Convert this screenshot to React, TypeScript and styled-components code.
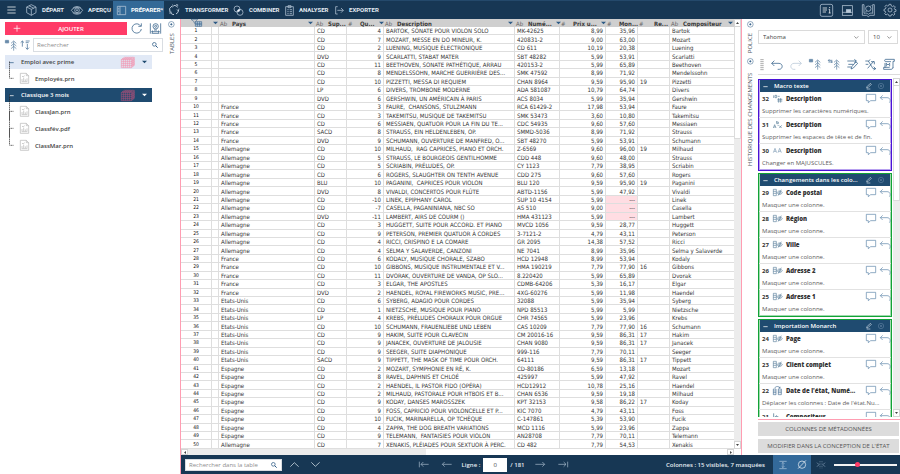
import React from "react";
import styled, { createGlobalStyle, css } from "styled-components";

const ui = `"Open Sans", "Noto Sans", sans-serif`;
const gridFont = `"DejaVu Sans Condensed", "Noto Sans", sans-serif`;
const navy = "#173754";
const blue = "#1f4b70";
const pink = "#ff3b67";
const line = "#2c5a85";

const GlobalStyle = createGlobalStyle`
  *, *::before, *::after { box-sizing: border-box; }
  body { margin: 0; background: #fff; font: 6px/8px ${ui}; color: #444; overflow: hidden; }
  button, input, select { font: inherit; color: inherit; margin: 0; padding: 0; border: 0; background: none; border-radius: 0; outline: 0; }
  h2, h3, p, ul { margin: 0; padding: 0; font: inherit; list-style: none; }
`;

/* ---------- icons ---------- */

const Svg = styled.svg<{ $w: number; $h: number; $c?: string }>`
  flex: none;
  display: block;
  width: ${(p) => p.$w}px;
  height: ${(p) => p.$h}px;
  color: ${(p) => p.$c ?? "inherit"};
  fill: none;
  stroke: currentColor;
  stroke-width: 2.2;
  overflow: visible;
`;

/* Every drawing uses three units to a pixel. */
const Icon = ({ w, h, d, c, children }: { w: number; h: number; d?: string; c?: string; children?: React.ReactNode }) => (
  <Svg $w={w} $h={h} $c={c} viewBox={`0 0 ${w * 3} ${h * 3}`} aria-hidden="true">
    {d && <path d={d} />}
    {children}
  </Svg>
);

const CubeIcon = () => <Icon w={11} h={12} d="M16 2 30 9V26L16 34 2 26V9ZM2 9l14 7 14-7M16 16V34M9 5.500l14 7" />;
const EyeIcon = () => (
  <Icon w={12} h={9} d="M1 13C9 1 27 1 35 13 27 25 9 25 1 13ZM5 7C12 0 24 0 31 7M5 20C12 26 24 26 31 20">
    <circle cx="18" cy="13" r="7" />
    <circle cx="18" cy="13" r="2" />
  </Icon>
);
const PanelsIcon = () => <Icon w={9} h={9} d="M1 1H26V26H1ZM9 1V26M3 7H7M3 12H7M3 17H7" />;
const CycleIcon = () => (
  <Icon w={12} h={12}>
    <path d="M6 24A14 14 0 0 1 12 6M18 4A14 14 0 0 1 29 10M32 18A14 14 0 0 1 24 30M18 32A14 14 0 0 1 8 27" strokeWidth="3" />
    <path d="M12 2l5 4-5 4M33 14l-2 6-5-3M6 30l0-6 6 1M24 2h5v5" />
  </Icon>
);
const CombineIcon = () => (
  <Icon w={11} h={11}>
    <circle cx="12" cy="12" r="9" />
    <circle cx="21" cy="22" r="9" />
    <path d="M13 20C13 15 17 12 21 13 21 18 17 21 13 20Z" fill="#fff" />
  </Icon>
);
const ClipboardIcon = () => <Icon w={9} h={11} d="M2 5H25V31H2ZM9 2H18V8H9ZM7 14H11M14 14H21M7 20H11M14 20H21M7 26H11M14 26H21" />;
const ExportIcon = () => <Icon w={9} h={9} d="M8 2H2V24H8M7 13H25M18 6l7 7-7 7" />;

const NoteIcon = () => (
  <Icon w={13} h={13}>
    <rect x="1" y="1" width="37" height="36" rx="5" />
    <path d="M8 12H21M8 18H21M8 24H18M29 16V27M26 16H29M26 27H32M29 9V12" stroke="#fff" />
  </Icon>
);
const WindowIcon = () => (
  <Icon w={11} h={11}>
    <rect x="1" y="2" width="30" height="29" />
    <path d="M1 22H31" />
    <rect x="13" y="14" width="13" height="8" fill="currentColor" />
  </Icon>
);
const BookIcon = () => (
  <Icon w={13} h={13} d="M6 2H1V34H14l5 4 5-4H37V2H32M6 2V28C12 26 16 28 19 31 22 28 26 26 32 28V2">
    <circle cx="19" cy="14" r="8" />
    <path d="M14 20l-3 4M24 8l4-4" />
  </Icon>
);
const GearIcon = () => (
  <Icon w={12} h={12}>
    <path
      d="M15 1H21L22 6 26 8 30 5 34 9 31 13 32 16 36 17V22L31 23 30 26 33 30 29 34 25 31 22 32 21 36H15L14 32 10 30 6 33 2 29 5 25 4 22 0 21V16L4 15 6 11 3 7 7 3 11 6 14 5Z"
    />
    <circle cx="18" cy="18" r="6" />
  </Icon>
);
const RefreshIcon = () => <Icon w={11} h={11} d="M29 9A14 14 0 1 0 31 18M31 1V10H22" />;
const ScanIcon = () => (
  <Icon w={11} h={11} d="M1 1V32M32 1V32M5 26H28M5 31H28M9 23l-4 3 4 3M24 23l4 3-4 3M12 21H21">
    <circle cx="17" cy="10" r="8" />
    <circle cx="17" cy="10" r="3" />
  </Icon>
);
const TreeIcon = ({ second }: { second?: boolean }) => (
  <Icon w={12} h={11} c="#416b92">
    <path d="M26 4V32M18 10l8-7 8 7M18 18l8-7 8 7M18 26l8-7 8 7" strokeWidth="1.800" />
    {second ? <path d="M1 4H13M1 9H13M4 1L1 4l3 3M10 6l3 3-3 3" /> : <path d="M1 1H11V9H1ZM6 1V9M1 5H11" strokeWidth="1.500" fill="#9fb5ca" />}
  </Icon>
);
const SortIcon = () => <Icon w={10} h={10} d="M7 20V3M2 8l5-5 5 5M22 12V28M17 23l5 5 5-5M17 3H29M17 8H26" c="#416b92" />;
const SearchIcon = () => (
  <Icon w={6} h={6} c={line}>
    <circle cx="7" cy="7" r="5.500" />
    <path d="M11 11l6 6" strokeWidth="3" />
  </Icon>
);
const DotIcon = () => (
  <Icon w={7} h={7} c={line}>
    <circle cx="10" cy="10" r="8.500" strokeWidth="1.500" />
    <circle cx="10" cy="10" r="2" fill="currentColor" />
  </Icon>
);
const MeshIcon = ({ c }: { c: string }) => (
  <Icon w={14} h={11} c={c}>
    <path
      d="M1 8H31V32H1ZM1 14H31M1 20H31M1 26H31M7 8V32M13 8V32M19 8V32M25 8V32M31 8l9-6V25l-9 7M1 8l9-7H40M31 14l9-6M31 20l9-6M31 26l9-6M34 6V29M37 4V27M7 8l9-7M13 8l9-7M19 8l9-7M25 8l9-7M4 5H34"
      strokeWidth="1.700"
    />
  </Icon>
);
const FileIcon = () => (
  <Icon w={9} h={11} c="#b5b5b5">
    <path d="M1 1H19l7 7V31H1ZM19 1V8H26" strokeWidth="2" />
    <path d="M6 25V18M11 25V14M16 25V19M21 25V16M5 26H22M6 9l3 3 5-4" strokeWidth="2" />
  </Icon>
);
const BranchLine = ({ last }: { last: boolean }) => (
  <Icon w={5} h={17} c="#222">
    <path d={`M1.500 ${last ? "-25V25" : "-25V51"}M5 25H13`} strokeWidth="3" strokeDasharray="3 3" />
  </Icon>
);
const DownIcon = ({ c = line }: { c?: string }) => (
  <Icon w={5} h={4} c={c}>
    <path d="M0 2H15L7.500 10Z" fill="currentColor" stroke="none" />
  </Icon>
);
const FilterTableIcon = () => (
  <Icon w={11} h={8} c={line}>
    <path d="M0 1H20L13 8V14L9 11V8Z" strokeWidth="1.500" />
    <path d="M13 8H32V22H13ZM13 13H32M13 17H32M19 8V22M26 8V22" strokeWidth="1.700" fill="#c3d3e2" />
  </Icon>
);
const UndoIcon = ({ c = line, flip }: { c?: string; flip?: boolean }) => (
  <Icon w={12} h={10} c={c}>
    <path d={flip ? "M26 2l8 8-8 8M34 10H12C-1 11 0 27 11 28H16" : "M10 2L2 10l8 8M2 10H24C37 11 36 27 25 28H20"} />
  </Icon>
);
const RenameIcon = () => <Icon w={11} h={11} d="M1 6H28M22 1l6 5-6 5M4 16H20M1 24H13M12 30l3-8L27 9l5 4-13 14Z" c={line} />;
const BranchIcon = () => <Icon w={11} h={11} d="M1 6H10L24 29H32M26 23l6 6-6 4M10 6l6-4M8 28l18-21M18 8h10v8M2 16H10" c={line} />;
const ScriptIcon = () => <Icon w={12} h={11} d="M8 1H34V7H30V26M8 1C4 1 4 8 8 8H24M6 12V26M2 31H24C30 31 30 25 30 24M2 31V25H20M10 13V22M10 13l5 5 5-5V22" c={line} />;
const MinusIcon = ({ c = "#fff" }: { c?: string }) => <Icon w={5} h={5} c={c} d="M1 8H14" />;
const PenIcon = () => <Icon w={6} h={6} d="M3 11L13 1l3 3L6 14 2 15ZM2 18H13" c="#c3d0dd" />;
const CloseIcon = () => (
  <Icon w={6} h={6} c="#6d8daa">
    <circle cx="9" cy="9" r="8" strokeWidth="1.500" />
    <path d="M6 6l6 6M12 6l-6 6" strokeWidth="1.500" />
  </Icon>
);
const CommentIcon = () => (
  <Icon w={10} h={9} c="#5b84a8">
    <path d="M1 1H29V20H14L7 26V20H1Z" strokeWidth="2" />
  </Icon>
);
const StepUndoIcon = () => (
  <Icon w={10} h={8} c="#5b84a8">
    <path d="M8 1L1 8l7 7M1 8H21C32 8 32 19 28 23" strokeWidth="2" />
  </Icon>
);

const stepIcons: Record<string, React.ReactNode> = {
  digits: (
    <Icon w={9} h={8} c="#47708f">
      <path d="M2 1V9M6 1H11V8H6ZM17 9V23M23 9V23M13 13H28M13 18H28M14 4H20" strokeWidth="1.800" />
    </Icon>
  ),
  spaces: (
    <Icon w={9} h={9} c="#47708f">
      <path d="M1 24L5 14 9 24M3 21H7M11 3V11H16V6H11M19 18l7 5M26 16l-7 8M14 15l3 3" strokeWidth="1.800" />
    </Icon>
  ),
  upper: (
    <Icon w={9} h={5} c="#7e9bb5">
      <path d="M1 14L6 1 11 14M3 10H9M15 14L20 1 25 14M17 10H23" strokeWidth="2" />
    </Icon>
  ),
  hide: (
    <Icon w={9} h={7} c="#47708f">
      <path d="M1 1H10V20H1ZM1 7H10M1 13H10" strokeWidth="1.700" />
      <path d="M12 11C16 4 24 4 28 11 24 18 16 18 12 11ZM25 2L15 20" strokeWidth="1.700" />
      <circle cx="20" cy="11" r="3" strokeWidth="1.500" />
    </Icon>
  ),
  move: (
    <Icon w={9} h={9} c={line}>
      <path d="M1 9H9V26H1ZM16 9H25V26H16ZM1 15H9M1 20H9M16 15H25M16 20H25M5 6C9 0 17 0 21 6M21 6V2M21 6H17" strokeWidth="1.700" />
    </Icon>
  ),
  size: <Icon w={9} h={7} c="#47708f" d="M2 1V20M8 11H16M11 7L7 11l4 4" />,
};

/* ---------- frame ---------- */

const Page = styled.div`
  display: flex;
  flex-direction: column;
  height: 100vh;
`;

const TopBar = styled.header`
  flex: none;
  display: flex;
  align-items: stretch;
  height: 19px;
  background: ${navy};
  border-top: 1px solid #24496b;
  color: #dfe8f0;
`;

const BareButton = styled.button`
  display: inline-flex;
  align-items: center;
  justify-content: center;
  flex: none;
  cursor: pointer;
`;

const MenuButton = styled(BareButton)`
  width: 22px;
  color: #fff;
`;

const Nav = styled.nav`
  display: flex;
`;

const NavLink = styled.a<{ $active?: boolean; $w: number }>`
  display: flex;
  align-items: center;
  gap: 5px;
  width: ${(p) => p.$w}px;
  padding: 0 4px;
  font-family: Roboto, ${ui};
  font-weight: 700;
  color: ${(p) => (p.$active ? "#fff" : "#e3ebf2")};
  background: ${(p) => (p.$active ? "#336997" : "none")};
  text-decoration: none;
  white-space: nowrap;
`;

const NavIcon = styled.span`
  display: flex;
  color: #b8c8d8;
`;

const TopTools = styled.div`
  display: flex;
  align-items: center;
  gap: 9px;
  margin-left: auto;
  padding-right: 4px;
  color: #b8c8d8;
`;

const Body = styled.div`
  flex: 1;
  display: flex;
  min-height: 0;
`;

const Sidebar = styled.aside`
  flex: none;
  width: 180px;
  display: flex;
`;

const SideContent = styled.div`
  flex: 1;
  padding: 3px 0 0 5px;
`;

const Workspace = styled.div`
  flex: 1;
  min-width: 0;
  display: flex;
  flex-direction: column;
  border-left: 1px solid #ff9db2;
`;

const Panels = styled.div`
  flex: 1;
  min-height: 0;
  display: flex;
`;

const Rail = styled.div<{ $w: number }>`
  flex: none;
  width: ${(p) => p.$w}px;
  display: flex;
  flex-direction: column;
  align-items: center;
  gap: 5px;
  padding-top: 2px;
`;

const RailTab = styled.button<{ $h: number }>`
  display: flex;
  align-items: center;
  justify-content: center;
  min-height: ${(p) => p.$h}px;
  writing-mode: vertical-rl;
  transform: rotate(180deg);
  white-space: nowrap;
  color: #4c5561;
`;

/* ---------- sidebar ---------- */

const SideTools = styled.div`
  display: flex;
  align-items: center;
  gap: 4px;
  height: 13px;
  padding-right: 2px;
  color: ${line};
`;

const ToolPair = styled.div`
  display: flex;
  gap: 8px;
`;

const AddButton = styled.button`
  flex: 1;
  display: grid;
  grid-template-columns: 10px 1fr;
  align-items: center;
  height: 13px;
  padding: 0 8px;
  background: ${pink};
  color: #fff;
  font-weight: 600;
`;

const SearchRow = styled.div`
  display: flex;
  align-items: center;
  gap: 3px;
  margin: 3px 0;
`;

const SearchBox = styled.label<{ $w?: number }>`
  display: flex;
  align-items: center;
  ${(p) => (p.$w ? css`width: ${p.$w}px;` : css`flex: 1;`)}
  height: ${(p) => (p.$w ? 12 : 14)}px;
  padding: 0 4px 0 3px;
  border: 1px solid #d9dde2;
  background: #fff;
  input { flex: 1; min-width: 0; height: 10px; color: #444; font-weight: 400; }
  input::placeholder { color: #8d8d8d; opacity: 1; }
`;

const Group = styled.section`
  width: 147px;
  margin-bottom: 1px;
  ul { padding-top: 1px; }
`;

const GroupHead = styled.h2<{ $active?: boolean }>`
  display: flex;
  align-items: center;
  height: 14px;
  padding: 0 5px 0 4px;
  gap: 7px;
  font-weight: 600;
  color: ${(p) => (p.$active ? "#fff" : "#444")};
  background: ${(p) => (p.$active ? blue : "#e1e9f6")};
  span { flex: 1; }
`;

const FileRow = styled.li`
  display: flex;
  align-items: center;
  height: 17px;
  padding-left: 4px;
  gap: 6px;
  font-weight: 600;
`;

/* ---------- data grid ---------- */

const GridPane = styled.main`
  flex: 1;
  min-width: 0;
  display: flex;
  flex-direction: column;
  border-right: 1px solid #ff9db2;
`;

const GridArea = styled.div`
  flex: 1;
  min-height: 0;
  display: flex;
`;

const TableBox = styled.div`
  flex: 1;
  min-width: 0;
  height: 100%;
`;

const Table = styled.table`
  width: 100%;
  height: 100%;
  table-layout: fixed;
  border-collapse: separate;
  border-spacing: 0;
  font: 6px/7px ${gridFont};
  color: #333;
`;

const HeadCell = styled.th`
  height: 8px;
  padding: 0 2px 0 1px;
  background: #cfcfcf;
  font-weight: 700;
  text-align: left;
  color: #3a3a3a;
`;

const HeadInner = styled.div<{ $end?: boolean }>`
  display: flex;
  align-items: center;
  gap: 4px;
  height: 8px;
  white-space: nowrap;
  b { flex: 1; text-align: ${(p) => (p.$end ? "right" : "left")}; }
`;

const TypeTag = styled.span`
  width: 8px;
  flex: none;
  font-weight: 400;
  color: #666;
`;

const Cell = styled.td<{ $align?: "right" | "center"; $bad?: boolean; $small?: boolean }>`
  padding: 0 2px;
  height: 8px;
  border-right: 1px solid #dedede;
  border-bottom: 1px solid #dedede;
  text-align: ${(p) => p.$align ?? "left"};
  white-space: pre;
  vertical-align: middle;
  background: ${(p) => (p.$bad ? "#ffdde3" : "#fff")};
  ${(p) => p.$small && css`font-size: 5px; color: #111;`}
`;

const VScroll = styled.div<{ $thumb: string }>`
  flex: none;
  width: 7px;
  display: flex;
  flex-direction: column;
  background: #ececec;
  i { flex: none; height: ${(p) => p.$thumb}; background: #fff; border: 1px solid #dcdcdc; border-top: 0; }
`;

const ScrollEnd = styled(BareButton)`
  width: 7px;
  height: 8px;
  background: #fff;
  border: 1px solid #d5d5d5;
`;

const Spacer = styled.span`
  flex: 1;
`;

const HScroll = styled.div`
  flex: none;
  display: flex;
  height: 6px;
  background: #fff;
  padding-right: 7px;
  i { width: 43%; background: #ececec; }
  button { height: 6px; }
`;

/* ---------- change history ---------- */

const History = styled.aside`
  flex: none;
  width: 142px;
  display: flex;
  flex-direction: column;
`;

const FontRow = styled.div`
  display: flex;
  gap: 3px;
  padding: 11px 2px 0 0;
`;

const SelectBox = styled.label<{ $w?: number }>`
  display: flex;
  align-items: center;
  ${(p) => (p.$w ? css`width: ${p.$w}px;` : css`flex: 1;`)}
  height: 14px;
  padding: 0 5px 0 4px;
  border: 1px solid #dadada;
  select { flex: 1; min-width: 0; appearance: none; }
`;

const ToolRow = styled.div`
  display: flex;
  align-items: center;
  justify-content: space-between;
  height: 20px;
  margin-top: 11px;
  padding: 0 5px 0 2px;
  border-bottom: 1px solid #dcdcdc;
`;

const Steps = styled.div`
  flex: 1;
  min-height: 0;
  display: flex;
  margin-top: 3px;
`;

const StepList = styled.div`
  flex: 1;
  min-width: 0;
  display: flex;
  flex-direction: column;
  gap: 2px;
  padding: 1px 1px 0 0;
  overflow: hidden;
`;

const StepGroup = styled.section<{ $c: string }>`
  flex: none;
  border: 1px solid ${(p) => p.$c};
  box-shadow: inset 0 0 0 1px ${(p) => p.$c}66;
`;

const StepHead = styled.h3`
  display: flex;
  align-items: center;
  gap: 6px;
  height: 12px;
  padding: 0 6px 0 3px;
  margin: 0 1px;
  background: ${blue};
  color: #fff;
  font-weight: 600;
  span { flex: 1; white-space: nowrap; }
`;

const Step = styled.li`
  height: 26px;
  padding: 1px 1px 0 3px;
  border-bottom: 1px solid #e2e2e2;
  &:last-child { border-bottom: 0; }
  p { margin-top: 3px; white-space: nowrap; color: #5d5d5d; }
`;

const StepTitle = styled.div`
  display: flex;
  align-items: center;
  gap: 4px;
  height: 11px;
  color: #333;
  font-weight: 700;
  white-space: nowrap;
  strong { flex: 1; }
`;

const Actions = styled.div`
  flex: none;
  display: grid;
  gap: 3px;
  margin-top: 2px;
  padding: 2px 1px 2px 0;
  border-top: 1px solid #ff9db2;
`;

const GreyButton = styled.button`
  height: 14px;
  background: #dcdcdc;
  color: #555;
  white-space: nowrap;
`;

/* ---------- status bar ---------- */

const StatusBar = styled.footer`
  flex: none;
  display: flex;
  align-items: center;
  height: 19px;
  padding: 0 3px 0 4px;
  background: ${navy};
  color: #e6edf3;
  font-weight: 600;
`;

const Arrows = styled.div<{ $gap: number }>`
  display: flex;
  align-items: center;
  gap: ${(p) => p.$gap}px;
  margin-left: 8px;
  color: #dce6ee;
`;

const Pager = styled.div`
  display: flex;
  align-items: center;
  gap: 10px;
  margin: 0 auto;
  color: #9fb3c6;
`;

const PageMoves = styled.div`
  display: flex;
  gap: 13px;
`;

const LineField = styled.label`
  display: flex;
  align-items: center;
  gap: 3px;
  color: #e6edf3;
  input { width: 24px; height: 14px; background: #fff; color: #444; text-align: center; font-weight: 400; }
`;

const Toggle = styled(BareButton)<{ $on?: boolean }>`
  width: 19px;
  height: 19px;
  color: #a9c2d8;
  background: ${(p) => (p.$on ? "#33699a" : "none")};
`;

const Zoom = styled.input`
  appearance: none;
  width: 63px;
  height: 6px;
  margin-left: 4px;
  background: linear-gradient(#f2f2f2, #f2f2f2) center / 100% 2px no-repeat;
  &::-webkit-slider-thumb { appearance: none; width: 5px; height: 5px; border-radius: 50%; background: ${pink}; }
`;

/* ---------- data ---------- */

const columns = [
  { w: 31 },
  { w: 7, filter: true },
  { w: 96, tag: "Ab", name: "Pays", filter: true },
  { w: 32, tag: "Ab", name: "Sup..." },
  { w: 37, tag: "#", name: "Qu...", filter: true, end: true },
  { w: 131, tag: "Ab", name: "Description", filter: true },
  { w: 45, tag: "Ab", name: "Numé...", filter: true },
  { w: 46, tag: "#", name: "Prix u...", filter: true, end: true },
  { w: 32, tag: "#", name: "Mon...", end: true },
  { w: 32, tag: "#", name: "Re...", end: true },
  { w: 65, tag: "Ab", name: "Compositeur", filter: true },
];

const F = "France";
const A = "Allemagne";
const U = "Etats-Unis";
const E = "Espagne";

type Row = [string, string, number, string, string, string, string, string, string];

const rows: Row[] = [
  ["", "CD", 4, "BARTOK, SONATE POUR VIOLON SOLO", "MK-42625", "8,99", "35,96", "", "Bartok"],
  ["", "CD", 7, "MOZART, MESSE EN DO MINEUR, K.", "420831-2", "9,00", "63,00", "", "Mozart"],
  ["", "CD", 2, "LUENING, MUSIQUE ÉLECTRONIQUE", "CD 611", "10,19", "20,38", "", "Luening"],
  ["", "DVD", 9, "SCARLATTI, STABAT MATER", "SBT 48282", "5,99", "53,91", "", "Scarlatti"],
  ["", "CD", 11, "BEETHOVEN, SONATE PATHÉTIQUE, ARRAU", "420153-2", "5,99", "65,89", "", "Beethoven"],
  ["", "CD", 8, "MENDELSSOHN, MARCHE GUERRIÈRE DES...", "SMK 47592", "8,99", "71,92", "", "Mendelssohn"],
  ["", "CD", 10, "PIZZETTI, MESSA DI REQUIEM", "CHAN 8964", "9,59", "95,90", "19", "Pizzetti"],
  ["", "LP", 6, "DIVERS, TROMBONE MODERNE", "ADA 581087", "10,79", "64,74", "", "Divers"],
  ["", "DVD", 6, "GERSHWIN, UN AMÉRICAIN À PARIS", "ACS 8034", "5,99", "35,94", "", "Gershwin"],
  [F, "CD", 3, "FAURE,  CHANSONS, STULZMANN", "RCA 61429-2", "17,98", "53,94", "", "Faure"],
  [F, "CD", 3, "TAKEMITSU, MUSIQUE DE TAKEMITSU", "SMK 53473", "3,60", "10,80", "", "Takemitsu"],
  [F, "CD", 6, "MESSIAEN, QUATUOR POUR LA FIN DU TE...", "CDC 54935", "9,60", "57,60", "", "Messiaen"],
  [F, "SACD", 8, "STRAUSS, EIN HELDENLEBEN, OP.", "SMMD-5036", "8,99", "71,92", "", "Strauss"],
  [F, "DVD", 9, "SCHUMANN, OUVERTURE DE MANFRED, O...", "SBT 48270", "5,99", "53,91", "", "Schumann"],
  [A, "CD", 10, "MILHAUD,  RAG CAPRICES, PIANO ET ORCH.", "Z-6569", "9,60", "96,00", "19", "Milhaud"],
  [A, "CD", 5, "STRAUSS, LE BOURGEOIS GENTILHOMME", "CDD 448", "9,60", "48,00", "", "Strauss"],
  [A, "CD", 5, "SCRIABIN, PRÉLUDES, OP.", "CY 1123", "7,79", "38,95", "", "Scriabin"],
  [A, "CD", 6, "ROGERS, SLAUGHTER ON TENTH AVENUE", "CDD 275", "9,60", "57,60", "", "Rogers"],
  [A, "BLU", 10, "PAGANINI,  CAPRICES POUR VIOLON", "BLU 120", "9,59", "95,90", "19", "Paganini"],
  [A, "DVD", 8, "VIVALDI, CONCERTOS POUR FLÛTE", "ABTD-1156", "5,99", "47,92", "", "Vivaldi"],
  [A, "CD", -10, "LINEK, EPIPHANY CAROL", "SUP 10 4154", "5,99", "---", "", "Linek"],
  [A, "CD", -7, "CASELLA, PAGANINIANA, NBC SO", "AS 510", "9,00", "---", "", "Casella"],
  [A, "DVD", -11, "LAMBERT, AIRS DE COURM ()", "HMA 431123", "5,99", "---", "", "Lambert"],
  [A, "CD", 3, "HUGGETT, SUITE POUR ACCORD. ET PIANO", "MVCD 1056", "9,59", "28,77", "", "Huggett"],
  [A, "CD", 9, "PETERSON, PREMIER QUATUOR À CORDES", "3-7121-2", "4,79", "43,11", "", "Peterson"],
  [A, "CD", 4, "RICCI, CRISPINO E LA COMARE", "GR 2095", "14,38", "57,52", "", "Ricci"],
  [A, "CD", 4, "SELMA Y SALAVERDE, CANZONI", "NE 7041", "8,99", "35,96", "", "Selma y Salaverde"],
  [F, "CD", 6, "KODALY, MUSIQUE CHORALE, SZABO", "HCD 12948", "8,99", "53,94", "", "Kodaly"],
  [F, "CD", 10, "GIBBONS, MUSIQUE INSTRUMENTALE ET V...", "HMA 190219", "7,79", "77,90", "16", "Gibbons"],
  [F, "CD", 11, "DVORAK, OUVERTURE DE VANDA, OP SLO...", "8.220420", "5,99", "65,89", "", "Dvorak"],
  [F, "CD", 3, "ELGAR, THE APOSTLES", "CDMB-64206", "5,39", "16,17", "", "Elgar"],
  [F, "DVD", 2, "HAENDEL, ROYAL FIREWORKS MUSIC, PRE...", "4XG-60276", "5,99", "11,98", "", "Haendel"],
  [U, "CD", 6, "SYBERG, ADAGIO POUR CORDES", "32088", "5,99", "35,94", "", "Syberg"],
  [U, "CD", 1, "NIETZSCHE, MUSIQUE POUR PIANO", "NPD 85513", "5,99", "5,99", "", "Nietzsche"],
  [U, "LP", 4, "KREBS, PRÉLUDES CHORAUX POUR ORGUE", "CHR 74565", "5,99", "23,96", "", "Krebs"],
  [U, "CD", 10, "SCHUMANN, FRAUENLIEBE UND LEBEN", "CAS 10209", "7,79", "77,90", "16", "Schumann"],
  [U, "CD", 9, "HAKIM, SUITE POUR CLAVECIN", "CM 20016-16", "9,59", "86,31", "17", "Hakim"],
  [U, "CD", 9, "JANACEK, OUVERTURE DE JALOUSIE", "CHAN 9080", "9,59", "86,31", "17", "Janacek"],
  [U, "CD", 9, "SEEGER, SUITE DIAPHONIQUE", "999-116", "7,79", "70,11", "", "Seeger"],
  [U, "SACD", 9, "TIPPETT, THE MASK OF TIME POUR ORCH.", "64111", "9,59", "86,31", "17", "Tippett"],
  [E, "CD", 2, "MOZART, SYMPHONIE EN RÉ, K.", "CD-80186", "6,59", "13,18", "", "Mozart"],
  [E, "CD", 8, "RAVEL, DAPHNIS ET CHLOÉ", "425997", "5,99", "47,92", "", "Ravel"],
  [E, "CD", 2, "HAENDEL, IL PASTOR FIDO (OPÉRA)", "HCD12912", "10,78", "25,16", "", "Haendel"],
  [E, "CD", 2, "MILHAUD, PASTORALE POUR HTBOIS ET B...", "CHAN 6536", "9,59", "19,18", "", "Milhaud"],
  [E, "CD", 9, "KODAY, DANSES MAROSSZEK", "KPT 32153", "9,58", "86,22", "17", "Koday"],
  [E, "CD", 9, "FOSS, CAPRICIO POUR VIOLONCELLE ET P...", "KIC 7070", "4,79", "43,11", "", "Foss"],
  [E, "CD", 10, "FUCIK, MARINARELLA, OP TCHÈQUE", "C-147861", "5,39", "53,90", "", "Fucik"],
  [E, "CD", 4, "ZAPPA, THE DOG BREATH VARIATIONS", "MCD 1116", "5,99", "23,96", "", "Zappa"],
  [E, "CD", 9, "TELEMANN,  FANTAISIES POUR VIOLON", "AN28708", "7,79", "70,11", "", "Telemann"],
  [A, "CD", 7, "XENAKIS, PLÉIADES POUR SEXTUOR À PERC.", "CD 482", "7,79", "54,53", "", "Xenakis"],
];

const nav = [
  { label: "DÉPART", icon: <CubeIcon />, w: 45 },
  { label: "APERÇU", icon: <EyeIcon />, w: 46 },
  { label: "PRÉPARER*", icon: <PanelsIcon />, w: 51, active: true },
  { label: "TRANSFORMER", icon: <CycleIcon />, w: 65 },
  { label: "COMBINER", icon: <CombineIcon />, w: 52 },
  { label: "ANALYSER", icon: <ClipboardIcon />, w: 50 },
  { label: "EXPORTER", icon: <ExportIcon />, w: 50 },
];

const sources = [
  { name: "Emploi avec prime", files: ["Employés.prn"] },
  { name: "Classique 3 mois", files: ["ClassJan.prn", "Classfév.pdf", "ClassMar.prn"], active: true },
];

type StepInfo = { n: number; name: string; icon: string; text?: string };

const hidden = (n: number, name: string): StepInfo => ({ n, name, icon: "hide", text: "Masquer une colonne." });

const history: { title: string; color: string; steps: StepInfo[] }[] = [
  {
    title: "Macro texte",
    color: "#4b12d6",
    steps: [
      { n: 32, name: "Description", icon: "digits", text: "Supprimer les caractères numériques." },
      { n: 31, name: "Description", icon: "spaces", text: "Supprimer les espaces de tête et de fin." },
      { n: 30, name: "Description", icon: "upper", text: "Changer en MAJUSCULES." },
    ],
  },
  {
    title: "Changements dans les colo...",
    color: "#12a336",
    steps: [hidden(29, "Code postal"), hidden(28, "Région"), hidden(27, "Ville"), hidden(26, "Adresse 2"), hidden(25, "Adresse 1")],
  },
  {
    title: "Importation Monarch",
    color: "#12a336",
    steps: [
      hidden(24, "Page"),
      hidden(23, "Client complet"),
      { n: 22, name: "Date de l'état, Numé...", icon: "move", text: "Déplacer les colonnes : Date de l'état.Nu..." },
      { n: 21, name: "Compositeur", icon: "size" },
    ],
  },
];

/* ---------- view ---------- */

const DataGrid = () => (
  <Table>
    <colgroup>
      {columns.map((c, i) => (
        <col key={i} width={c.w} />
      ))}
    </colgroup>
    <thead>
      <tr>
        {columns.map((c, i) => (
          <HeadCell key={i} scope="col">
            <HeadInner $end={c.end}>
              {i === 0 && (
                <>
                  <Spacer />
                  <FilterTableIcon />
                  <Spacer />
                </>
              )}
              {c.tag && <TypeTag>{c.tag}</TypeTag>}
              {c.name && <b>{c.name}</b>}
              {c.filter && <DownIcon />}
            </HeadInner>
          </HeadCell>
        ))}
      </tr>
    </thead>
    <tbody>
      {rows.map(([country, media, qty, title, ref, price, total, re, composer], i) => (
        <tr key={i}>
          <Cell $align="center" $small>{i + 1}</Cell>
          <Cell />
          <Cell>{country}</Cell>
          <Cell>{media}</Cell>
          <Cell $align="right">{qty}</Cell>
          <Cell>{title}</Cell>
          <Cell>{ref}</Cell>
          <Cell $align="right">{price}</Cell>
          <Cell $align="right" $bad={total === "---"}>{total}</Cell>
          <Cell>{re}</Cell>
          <Cell>{composer}</Cell>
        </tr>
      ))}
    </tbody>
  </Table>
);

const VerticalBar = ({ thumb }: { thumb: string }) => (
  <VScroll $thumb={thumb}>
    <ScrollEnd aria-label="Haut">
      <Icon w={3} h={2}><path d="M0 6 4.500 0 9 6Z" fill="#444" stroke="none" /></Icon>
    </ScrollEnd>
    <i />
    <Spacer />
    <ScrollEnd aria-label="Bas">
      <Icon w={3} h={2}><path d="M0 0H9L4.500 6Z" fill="#444" stroke="none" /></Icon>
    </ScrollEnd>
  </VScroll>
);

const App = () => (
  <Page>
    <GlobalStyle />
    <TopBar>
      <MenuButton aria-label="Menu">
        <Icon w={9} h={8} d="M1 3H26M1 12H26M1 21H26" />
      </MenuButton>
      <Nav>
        {nav.map((n) => (
          <NavLink key={n.label} href="#" $active={n.active} $w={n.w}>
            <NavIcon>{n.icon}</NavIcon>
            {n.label}
          </NavLink>
        ))}
      </Nav>
      <TopTools>
        <BareButton aria-label="Notes"><NoteIcon /></BareButton>
        <BareButton aria-label="Fenêtre"><WindowIcon /></BareButton>
        <BareButton aria-label="Aide"><BookIcon /></BareButton>
        <BareButton aria-label="Paramètres"><GearIcon /></BareButton>
      </TopTools>
    </TopBar>

    <Body>
      <Sidebar>
        <SideContent>
          <SideTools>
            <AddButton>
              <Icon w={8} h={7} d="M12 1V20M2 10H22" />
              AJOUTER
            </AddButton>
            <ToolPair>
              <BareButton aria-label="Actualiser"><RefreshIcon /></BareButton>
              <BareButton aria-label="Ajuster"><ScanIcon /></BareButton>
            </ToolPair>
          </SideTools>
          <SearchRow>
            <BareButton aria-label="Arborescence"><TreeIcon /></BareButton>
            <BareButton aria-label="Trier"><SortIcon /></BareButton>
            <SearchBox>
              <input aria-label="Rechercher" placeholder="Rechercher" />
              <SearchIcon />
            </SearchBox>
          </SearchRow>
          {sources.map((s) => (
            <Group key={s.name}>
              <GroupHead $active={s.active}>
                <MinusIcon c={s.active ? "#fff" : line} />
                <span>{s.name}</span>
                <MeshIcon c={s.active ? "#b04f78" : "#f58aa6"} />
                <DownIcon c={s.active ? "#fff" : blue} />
              </GroupHead>
              <ul>
                {s.files.map((f, i) => (
                  <FileRow key={f}>
                    <BranchLine last={i === s.files.length - 1} />
                    <FileIcon />
                    {f}
                  </FileRow>
                ))}
              </ul>
            </Group>
          ))}
        </SideContent>
        <Rail $w={17}>
          <DotIcon />
          <RailTab $h={22}>TABLES</RailTab>
        </Rail>
      </Sidebar>

      <Workspace>
        <Panels>
          <GridPane>
            <GridArea>
              <TableBox>
                <DataGrid />
              </TableBox>
              <VerticalBar thumb="26%" />
            </GridArea>
            <HScroll>
              <ScrollEnd aria-label="Gauche">
                <Icon w={2} h={3}><path d="M6 0V9L0 4.500Z" fill="#444" stroke="none" /></Icon>
              </ScrollEnd>
              <i />
              <Spacer />
              <ScrollEnd aria-label="Droite">
                <Icon w={2} h={3}><path d="M0 0V9L6 4.500Z" fill="#444" stroke="none" /></Icon>
              </ScrollEnd>
            </HScroll>
          </GridPane>

          <Rail $w={16}>
            <DotIcon />
            <RailTab $h={20}>POLICE</RailTab>
            <DotIcon />
            <RailTab $h={99}>HISTORIQUE DES CHANGEMENTS</RailTab>
          </Rail>

          <History>
            <FontRow>
              <SelectBox>
                <select aria-label="Police" defaultValue="Tahoma"><option>Tahoma</option></select>
                <Icon w={5} h={3} c="#777" d="M1 1l6 6 6-6" />
              </SelectBox>
              <SelectBox $w={30}>
                <select aria-label="Taille" defaultValue="10"><option>10</option></select>
                <Icon w={5} h={3} c="#777" d="M1 1l6 6 6-6" />
              </SelectBox>
            </FontRow>
            <ToolRow>
              <Icon w={4} h={11} c="#8a8a8a" d="M1 2H11M1 8H11M1 14H11M1 20H11M1 26H11M1 32H11" />
              <BareButton aria-label="Annuler"><UndoIcon /></BareButton>
              <BareButton aria-label="Rétablir"><UndoIcon flip c="#b5c6d6" /></BareButton>
              <BareButton aria-label="Développer"><TreeIcon /></BareButton>
              <BareButton aria-label="Réduire"><TreeIcon second /></BareButton>
              <BareButton aria-label="Modifier"><RenameIcon /></BareButton>
              <BareButton aria-label="Fusionner"><BranchIcon /></BareButton>
              <BareButton aria-label="Script"><ScriptIcon /></BareButton>
            </ToolRow>
            <Steps>
              <StepList>
                {history.map((g) => (
                  <StepGroup key={g.title} $c={g.color}>
                    <StepHead>
                      <MinusIcon />
                      <span>{g.title}</span>
                      <PenIcon />
                      <CloseIcon />
                    </StepHead>
                    <ul>
                      {g.steps.map((s) => (
                        <Step key={s.n}>
                          <StepTitle>
                            {s.n}
                            {stepIcons[s.icon]}
                            <strong>{s.name}</strong>
                            <BareButton aria-label="Commenter"><CommentIcon /></BareButton>
                            <BareButton aria-label="Annuler"><StepUndoIcon /></BareButton>
                          </StepTitle>
                          {s.text && <p>{s.text}</p>}
                        </Step>
                      ))}
                    </ul>
                  </StepGroup>
                ))}
              </StepList>
              <VerticalBar thumb="34%" />
            </Steps>
            <Actions>
              <GreyButton>COLONNES DE MÉTADONNÉES</GreyButton>
              <GreyButton>MODIFIER DANS LA CONCEPTION DE L'ÉTAT</GreyButton>
            </Actions>
          </History>
        </Panels>

        <StatusBar>
          <SearchBox $w={97}>
            <input aria-label="Rechercher dans la table" placeholder="Rechercher dans la table" />
            <SearchIcon />
          </SearchBox>
          <Arrows $gap={12}>
            <BareButton aria-label="Précédent"><Icon w={9} h={5} d="M1 14L13 2 26 14" /></BareButton>
            <BareButton aria-label="Suivant"><Icon w={9} h={5} d="M1 1L13 13 26 1" /></BareButton>
          </Arrows>
          <Pager>
            <PageMoves>
              <BareButton aria-label="Première ligne"><Icon w={10} h={7} d="M1 2V19M6 10H29M13 3L6 10l7 7" /></BareButton>
              <BareButton aria-label="Ligne précédente"><Icon w={10} h={7} d="M1 10H29M8 3L1 10l7 7" /></BareButton>
            </PageMoves>
            <LineField>
              Ligne :
              <input defaultValue="0" />
              / 181
            </LineField>
            <PageMoves>
              <BareButton aria-label="Ligne suivante"><Icon w={10} h={7} d="M1 10H29M22 3l7 7-7 7" /></BareButton>
              <BareButton aria-label="Dernière ligne"><Icon w={10} h={7} d="M29 2V19M1 10H24M17 3l7 7-7 7" /></BareButton>
            </PageMoves>
          </Pager>
          <span>Colonnes : 15 visibles, 7 masquées</span>
          <Arrows $gap={0}>
            <Toggle $on aria-label="Hauteur"><Icon w={8} h={8} d="M1 1H23M1 23H23M12 5V19M8 8l4-4 4 4M8 16l4 4 4-4" /></Toggle>
            <Toggle $on aria-label="Valeurs nulles">
              <Icon w={10} h={9} c="#e6edf3"><circle cx="15" cy="14" r="11" /><path d="M3 26L27 1" /></Icon>
            </Toggle>
            <Toggle aria-label="Largeur">
              <Icon w={10} h={7} c="#8fa8bf">
                <path d="M3 5l6 6-6 6M27 5l-6 6 6 6" strokeWidth="2" />
                <path d="M12 0V22M18 0V22" strokeWidth="1.500" strokeDasharray="3 2" />
              </Icon>
            </Toggle>
          </Arrows>
          <Zoom type="range" aria-label="Zoom" defaultValue={37} />
        </StatusBar>
      </Workspace>
    </Body>
  </Page>
);

export default App;
